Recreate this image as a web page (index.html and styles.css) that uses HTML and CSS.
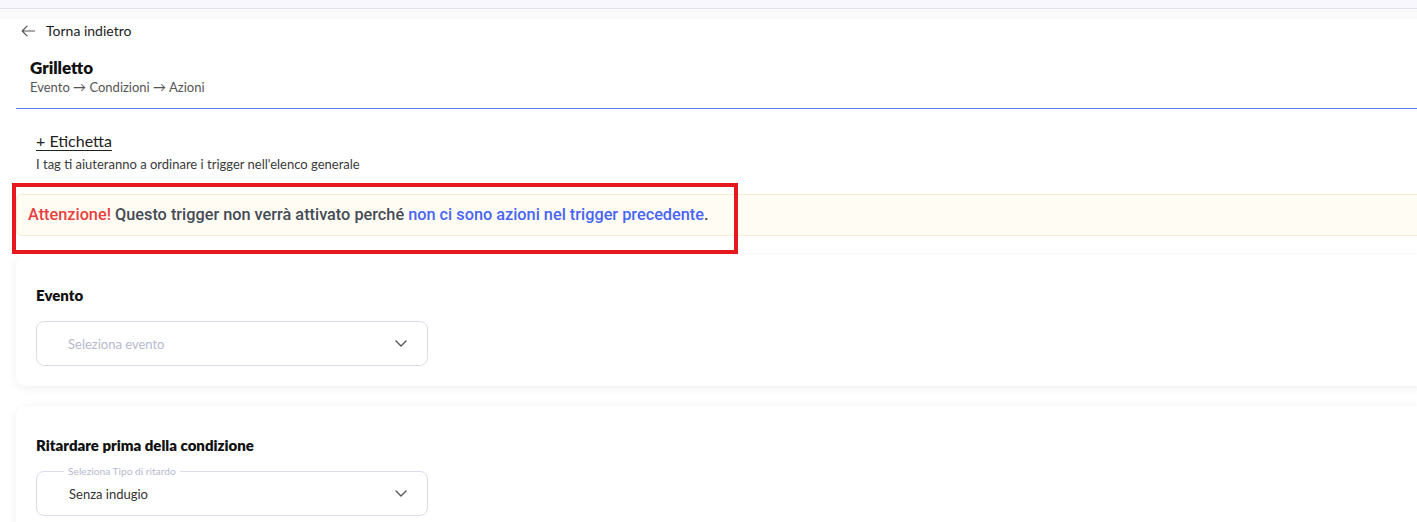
FILE: index.html
```html
<!DOCTYPE html>
<html lang="it">
<head>
<meta charset="utf-8">
<title>Grilletto</title>
<link rel="stylesheet" href="styles.css">
</head>
<body>
<div class="topbar"></div>
<div class="subbar"></div>
<main class="panel">
  <div class="back">
    <svg class="back-icon" width="14" height="12" viewBox="0 0 14 12"><path d="M13.5 6H1.2M6 1.2L1.2 6 6 10.8" fill="none" stroke="#555" stroke-width="1.2" stroke-linecap="round" stroke-linejoin="round"/></svg>
    <span>Torna indietro</span>
  </div>
  <header class="head">
    <h1 class="title">Grilletto</h1>
    <div class="crumbs">Evento → Condizioni → Azioni</div>
  </header>
  <hr class="divider">
  <section class="tags">
    <a class="tag-link">+ Etichetta</a>
    <p class="tag-help">I tag ti aiuteranno a ordinare i trigger nell'elenco generale</p>
  </section>
  <div class="warning">
    <p class="warning-text"><span class="w-red">Attenzione!</span> Questo trigger non verrà attivato perché <span class="w-blue">non ci sono azioni nel trigger precedente</span>.</p>
  </div>
  <section class="card card-first">
    <h2 class="card-title">Evento</h2>
    <div class="select">
      <span class="placeholder">Seleziona evento</span>
      <svg class="chev" width="12" height="7" viewBox="0 0 12 7"><path d="M1 1l5 5 5-5" fill="none" stroke="#555" stroke-width="1.4" stroke-linecap="round" stroke-linejoin="round"/></svg>
    </div>
  </section>
  <section class="card card-second">
    <h2 class="card-title">Ritardare prima della condizione</h2>
    <div class="select select-labeled">
      <span class="float-label">Seleziona Tipo di ritardo</span>
      <span class="value">Senza indugio</span>
      <svg class="chev" width="12" height="7" viewBox="0 0 12 7"><path d="M1 1l5 5 5-5" fill="none" stroke="#555" stroke-width="1.4" stroke-linecap="round" stroke-linejoin="round"/></svg>
    </div>
  </section>
</main>
<div class="annot"></div>
</body>
</html>
```
FILE: styles.css
```css
* { box-sizing: border-box; }
html, body { margin: 0; padding: 0; }
body {
  background: #fafafb;
  font-family: "Lato", "Noto Sans", sans-serif;
  color: #222;
  overflow: hidden;
  position: relative;
  height: 522px;
}
.topbar {
  height: 9px;
  background: #f7f7fd;
  border-bottom: 1px solid #e1e1ec;
}
.subbar {
  height: 10px;
  background: #fafafa;
}
.panel {
  background: #fff;
  height: 503px;
}
.back {
  height: 23px;
  display: flex;
  align-items: center;
  padding-left: 21px;
  font-size: 14px;
  color: #222;
}
.back-icon { margin-right: 11px; }
.head {
  padding-left: 30px;
  margin-top: 16px;
}
.title {
  margin: 0;
  font-size: 17px;
  line-height: 20px;
  font-weight: 800;
  color: #111;
}
.crumbs {
  margin-top: 1px;
  font-size: 13px;
  line-height: 16px;
  color: #555;
}
.divider {
  margin: 13px 0 0 16px;
  border: 0;
  border-top: 1px solid #5b7df0;
  height: 0;
}
.tags {
  padding-left: 36px;
  margin-top: 22px;
}
.tag-link {
  display: block;
  font-size: 16px;
  line-height: 20px;
  color: #222;
  text-decoration: underline;
  text-underline-offset: 3px;
  text-decoration-thickness: 1px;
}
.tag-help {
  margin: 5px 0 0;
  font-size: 13px;
  line-height: 17px;
  color: #3a3a3a;
}
.warning {
  margin: 21px -10px 0 16px;
  height: 42px;
  display: flex;
  align-items: center;
  padding-left: 11px;
  background: #fffcf3;
  border: 1px solid #f6edcc;
  border-radius: 5px;
}
.warning-text {
  margin: 0;
  font-family: "Roboto", "Liberation Sans", sans-serif;
  font-weight: 500;
  font-size: 16.3px;
  line-height: 20px;
  color: #454b55;
  white-space: nowrap;
}
.w-red { color: #e8403f; }
.w-blue { color: #4865f5; }
.card {
  margin: 0 -12px 0 16px;
  background: #fff;
  border-radius: 10px;
  box-shadow: 0 2px 10px rgba(40, 40, 90, 0.07);
  padding-left: 20px;
}
.card-first {
  margin-top: 19px;
  padding-top: 31px;
  padding-bottom: 20px;
}
.card-second {
  margin-top: 20px;
  padding-top: 30px;
  padding-bottom: 20px;
}
.card-title {
  margin: 0;
  font-size: 15px;
  line-height: 18px;
  font-weight: 800;
  color: #111;
}
.select {
  position: relative;
  margin-top: 17px;
  width: 392px;
  height: 45px;
  border: 1px solid #dddce9;
  border-radius: 8px;
  display: flex;
  align-items: center;
  padding-left: 31px;
  padding-right: 20px;
  font-size: 13px;
}
.select-labeled { margin-top: 17px; }
.placeholder { color: #b7b9cc; flex: 1; }
.value { color: #333; flex: 1; padding-left: 1px; }
.chev { flex: none; }
.float-label {
  position: absolute;
  left: 27px;
  top: -8px;
  padding: 0 4px;
  background: #fff;
  font-size: 10.2px;
  line-height: 14px;
  color: #b7b9cc;
}
.annot {
  position: absolute;
  left: 12px;
  top: 183px;
  width: 726px;
  height: 71px;
  border: 4px solid #e5191d;
}
```
